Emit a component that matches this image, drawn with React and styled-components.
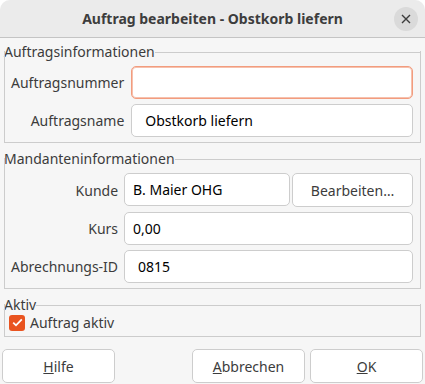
import React, { useState } from 'react';
import styled, { createGlobalStyle } from 'styled-components';

//////////////////////////////////////////////////

const GlobalStyle = createGlobalStyle`
  html, body {
    margin: 0;
    padding: 0;
    background: #ffffff;
  }
  body {
    font-family: "Noto Sans", "DejaVu Sans", sans-serif;
    font-size: 14px;
    color: #3c3c3c;
  }
`;

const App = () => {
  const [aktiv, setAktiv] = useState(true);

  return (
    <>
      <GlobalStyle />
      <Window>
        <TitleBar>
          <Title>Auftrag bearbeiten - Obstkorb liefern</Title>
          <CloseButton aria-label='Schließen'>
            <svg width='10' height='10' viewBox='0 0 10 10'>
              <path d='M1 1 L9 9 M9 1 L1 9' stroke='#3c3c3c' strokeWidth='1.4' />
            </svg>
          </CloseButton>
        </TitleBar>

        <Content>
          <Group>
            <Legend>Auftragsinformationen</Legend>
            <FormGrid $inset={7}>
              <Label>Auftragsnummer</Label>
              <Input $focus />
              <Label>Auftragsname</Label>
              <Input defaultValue='Obstkorb liefern' />
            </FormGrid>
          </Group>

          <Group>
            <Legend>Mandanteninformationen</Legend>
            <FormGrid $inset={6}>
              <Label>Kunde</Label>
              <SplitRow>
                <Input defaultValue='B. Maier OHG' $pad={8} />
                <Button $fill>Bearbeiten…</Button>
              </SplitRow>
              <Label>Kurs</Label>
              <Input defaultValue='0,00' $pad={8} />
              <Label>Abrechnungs-ID</Label>
              <Input defaultValue='0815' />
            </FormGrid>
          </Group>

          <Group>
            <Legend>Aktiv</Legend>
            <CheckRow onClick={() => setAktiv(!aktiv)}>
              <CheckBox $checked={aktiv}>
                {aktiv && (
                  <svg width='11' height='9' viewBox='0 0 11 9'>
                    <path d='M1.2 4.6 L4 7.3 L9.8 1.4' fill='none' stroke='#ffffff' strokeWidth='1.8' />
                  </svg>
                )}
              </CheckBox>
              Auftrag aktiv
            </CheckRow>
          </Group>

          <ButtonBar>
            <Button><u>H</u>ilfe</Button>
            <Spacer />
            <Button><u>A</u>bbrechen</Button>
            <Button><u>O</u>K</Button>
          </ButtonBar>
        </Content>
      </Window>
    </>
  );
};

//////////////////////////////////////////////////

const Window = styled.div`
  width: 425px;
  height: 384px;
  background: #f6f6f6;
  border-radius: 10px 10px 0 0;
  overflow: hidden;
  display: flex;
  flex-direction: column;
`;

const TitleBar = styled.div`
  height: 37px;
  flex-shrink: 0;
  background: #ebebeb;
  border-bottom: 1px solid #c4c4c4;
  display: flex;
  align-items: center;
  justify-content: center;
  position: relative;
`;

const Title = styled.div`
  font-weight: bold;
  font-size: 14px;
  color: #3d3d3d;
`;

const CloseButton = styled.button`
  position: absolute;
  right: 7px;
  top: 7px;
  width: 24px;
  height: 24px;
  border-radius: 50%;
  border: none;
  background: #dadada;
  display: flex;
  align-items: center;
  justify-content: center;
  padding: 0;
`;

const Content = styled.div`
  flex: 1;
  display: flex;
  flex-direction: column;
  padding: 6px 4px 0 4px;
`;

const Group = styled.div`
  display: flex;
  flex-direction: column;
  margin-bottom: 8px;
`;

const Legend = styled.div`
  line-height: 15px;
  height: 15px;
  display: flex;
  align-items: center;
  color: #3c3c3c;

  &::after {
    content: '';
    flex: 1;
    height: 1px;
    background: #cccccc;
    margin-top: 1px;
  }
`;

const FormGrid = styled.div`
  display: grid;
  grid-template-columns: auto 1fr;
  column-gap: ${p => p.$inset}px;
  row-gap: 5px;
  align-items: center;
  border: 1px solid #cccccc;
  border-top: none;
  margin-top: -8px;
  padding: 15px 7px 5px 6px;
`;

const Label = styled.label`
  justify-self: end;
  color: #3c3c3c;
`;

const Input = styled.input`
  height: 33px;
  box-sizing: border-box;
  width: 100%;
  min-width: 0;
  border: 1px solid ${p => (p.$focus ? '#f29c7e' : '#cdcdcd')};
  box-shadow: ${p => (p.$focus ? 'inset 0 0 0 1px #f6c1ae' : 'none')};
  border-radius: 5px;
  background: #ffffff;
  padding: 0 ${p => p.$pad || 13}px;
  font-family: inherit;
  font-size: 14px;
  color: #000000;
  outline: none;
`;

const SplitRow = styled.div`
  display: flex;
  gap: 2px;
`;

const Button = styled.button`
  height: 34px;
  width: 113px;
  flex: ${p => (p.$fill ? '0 0 121px' : '0 0 113px')};
  box-sizing: border-box;
  border: 1px solid #cdcdcd;
  border-radius: 5px;
  background: #ffffff;
  font-family: inherit;
  font-size: 14px;
  color: #3c3c3c;
  padding: 0;
`;

const CheckRow = styled.div`
  display: flex;
  align-items: center;
  gap: 5px;
  border: 1px solid #cccccc;
  border-top: none;
  margin-top: -8px;
  padding: 9px 4px 4px 4px;
  color: #3c3c3c;
  cursor: default;
`;

const CheckBox = styled.span`
  width: 16px;
  height: 16px;
  border-radius: 3px;
  background: ${p => (p.$checked ? '#e95420' : '#ffffff')};
  display: flex;
  align-items: center;
  justify-content: center;
`;

const ButtonBar = styled.div`
  display: flex;
  gap: 5px;
  margin: 4px -2px 0 -2px;
`;

const Spacer = styled.div`
  flex: 1;
`;

//////////////////////////////////////////////////

export default App;
